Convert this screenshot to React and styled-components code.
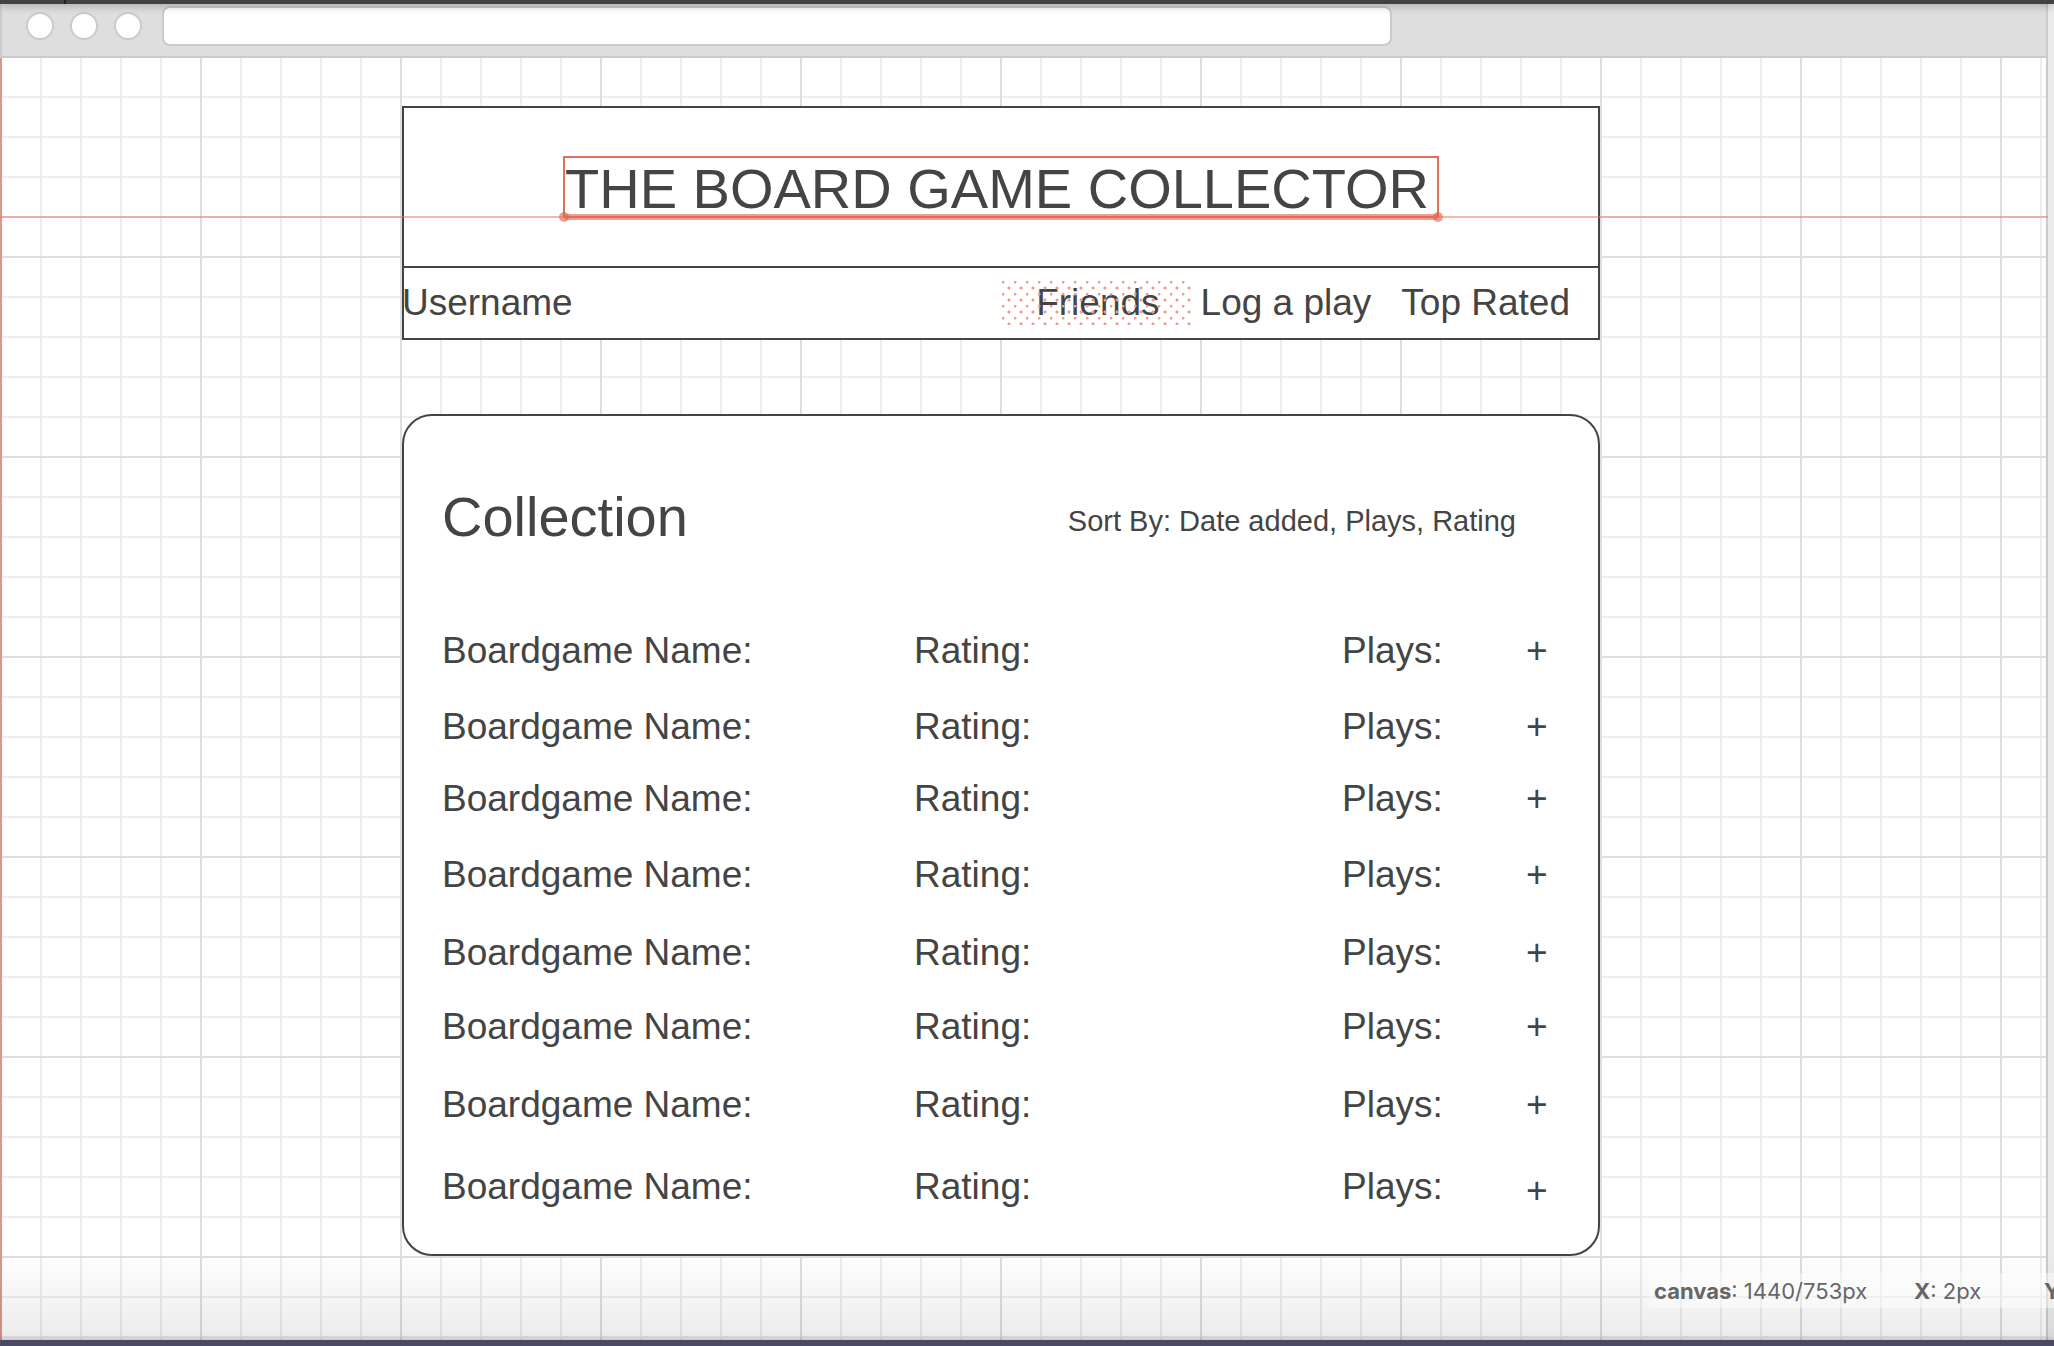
import React from "react";
import styled, { createGlobalStyle, css } from "styled-components";

const ink = "#444444";
const accent = "#e0705a";

const GlobalStyle = createGlobalStyle`
  *, *::before, *::after { box-sizing: border-box; }
  body { margin: 0; background: #ebebeb; overflow: hidden; }
`;

const Screen = styled.div`
  position: relative;
  display: flex;
  flex-direction: column;
  height: 100vh;
  overflow: hidden;
  font-family: "Liberation Sans", Arial, Helvetica, sans-serif;
  color: ${ink};
`;

const AppBar = styled.div`
  position: relative;
  z-index: 2;
  flex: none;
  height: 4px;
  background: linear-gradient(to right, #424242 64px, #222222 64px, #222222 66px, #424242 66px);
  box-shadow: 0 0 10px rgba(0, 0, 0, 0.5);
`;

const Frame = styled.div`
  flex: 1;
  min-height: 0;
  display: flex;
  flex-direction: column;
  margin-right: 6px;
`;

const BrowserBar = styled.div`
  flex: none;
  display: flex;
  align-items: center;
  gap: 16px;
  height: 54px;
  padding: 0 24px 8px;
  background: #dedede;
  border: solid #cbcbcb;
  border-width: 0 2px 2px;
`;

const WindowDot = styled.span`
  flex: none;
  width: 28px;
  height: 28px;
  border: 2px solid #cbcbcb;
  border-radius: 50%;
  background: #ffffff;
`;

const AddressBar = styled.input`
  width: calc(60% + 32px);
  height: 40px;
  margin-left: 4px;
  padding: 0 12px;
  border: 2px solid #cbcbcb;
  border-radius: 8px;
  background: #ffffff;
  color: ${ink};
  font: inherit;
  font-size: 29px;
  outline: none;
`;

const Canvas = styled.main`
  position: relative;
  flex: 1;
  min-height: 0;
  padding: 48px 446px 0 400px;
  border: solid #cbcbcb;
  border-width: 0 2px 0 0;
  border-left: 2px solid #e0968a;
  background-color: #ffffff;
  background-image:
    linear-gradient(to right, #dedede 2px, transparent 2px),
    linear-gradient(to bottom, #dedede 2px, transparent 2px),
    linear-gradient(to right, #ededed 2px, transparent 2px),
    linear-gradient(to bottom, #ededed 2px, transparent 2px);
  background-size: 200px 200px, 200px 200px, 40px 40px, 40px 40px;
  background-position: -2px -2px;
`;

const Banner = styled.header`
  display: flex;
  justify-content: center;
  align-items: flex-start;
  height: 162px;
  padding-top: 48px;
  border: 2px solid ${ink};
  background: #ffffff;
`;

const Title = styled.h1`
  position: relative;
  margin: 0;
  padding-right: 8px;
  border: 2px solid ${accent};
  height: 62px;
  font-size: 56px;
  line-height: 62px;
  font-weight: 400;
  white-space: nowrap;
`;

/* Selected bottom edge: a translucent band with a handle on each end. */
const SelectedEdge = styled.span`
  position: absolute;
  left: 0;
  right: 0;
  bottom: -4px;
  height: 6px;
  background: rgba(224, 94, 72, 0.6);

  &::before, &::after {
    content: "";
    position: absolute;
    top: -2px;
    width: 10px;
    height: 10px;
    border-radius: 50%;
    background: rgba(224, 94, 72, 0.6);
  }
  &::before { left: -6px; }
  &::after { right: -6px; }
`;

const Guide = styled.div`
  position: absolute;
  left: -2px;
  right: -2px;
  top: 158px;
  height: 2px;
  background: rgba(240, 112, 84, 0.5);
`;

const Nav = styled.nav`
  display: flex;
  align-items: center;
  height: 74px;
  margin-top: -2px;
  padding-right: 28px;
  border: 2px solid ${ink};
  background: #ffffff;
  font-size: 37px;
  line-height: 44px;
  white-space: nowrap;
`;

const NavLink = styled.a`
  color: inherit;
  text-decoration: none;
  & + & { margin-left: 30px; }
  ${(p) =>
    p.$user &&
    css`
      margin-left: -2px;
      margin-right: auto;
    `}
  ${(p) =>
    p.$hatched &&
    css`
      position: relative;
      padding: 0 34px;
      margin-right: -23px;
      &::after {
        content: "";
        position: absolute;
        inset: 0;
        background-image:
          radial-gradient(circle at 1px 1px, #f09a8b 1px, transparent 2px),
          radial-gradient(circle at 7px 7px, #f09a8b 1px, transparent 2px);
        background-size: 12px 12px;
      }
    `}
`;

const Panel = styled.section`
  height: 842px;
  margin-top: 74px;
  padding: 70px 38px 0;
  border: 2px solid ${ink};
  border-radius: 30px;
  background: #ffffff;
`;

const PanelHead = styled.div`
  display: flex;
  align-items: center;
  justify-content: space-between;
  margin-bottom: 82px;
  padding-right: 44px;
`;

const PanelTitle = styled.h2`
  margin: 0;
  font-size: 56px;
  line-height: 62px;
  font-weight: 400;
`;

const SortBy = styled.p`
  margin: 0;
  padding-top: 8px;
  font-size: 29px;
  line-height: 34px;
`;

const Games = styled.table`
  width: 100%;
  table-layout: fixed;
  border-collapse: collapse;
  font-size: 37px;
  line-height: 42px;
`;

const Row = styled.tr`
  height: ${(p) => p.$height}px;
  &:last-child td:last-child { vertical-align: bottom; }
`;

const Cell = styled.td`
  width: ${(p) => p.$width};
  padding: 0;
  vertical-align: top;
  white-space: nowrap;
`;

const AddButton = styled.button`
  display: block;
  padding: 0;
  border: 0;
  background: none;
  color: inherit;
  font: inherit;
  cursor: pointer;
`;

const BottomShade = styled.div`
  position: absolute;
  left: 0;
  right: 0;
  bottom: 6px;
  height: 90px;
  pointer-events: none;
  background: linear-gradient(to bottom, rgba(0, 0, 0, 0), rgba(0, 0, 0, 0.08));
`;

const Status = styled.footer`
  position: absolute;
  right: 0;
  bottom: 38px;
  display: flex;
  width: 414px;
  padding-left: 14px;
  overflow: hidden;
  background: linear-gradient(to right, rgba(255, 255, 255, 0), rgba(255, 255, 255, 0.45) 14px);
  font-family: Inter, sans-serif;
  font-size: 22px;
  line-height: 34px;
  color: #666666;
  white-space: nowrap;
`;

const StatusItem = styled.span`
  flex: none;
  width: ${(p) => p.$width}px;
  padding-top: 1px;
  strong { font-weight: 700; }
`;

const BottomBar = styled.div`
  position: relative;
  flex: none;
  height: 6px;
  background: #4a4a66;
  box-shadow: 0 0 5px rgba(0, 0, 0, 0.3);
`;

const rowHeights = [76, 72, 76, 78, 74, 78, 82, 46];

export default function App() {
  return (
    <Screen>
      <GlobalStyle />
      <AppBar />
      <Frame>
        <BrowserBar>
          <WindowDot />
          <WindowDot />
          <WindowDot />
          <AddressBar type="text" aria-label="Address" />
        </BrowserBar>
        <Canvas>
          <Banner>
            <Title>
              THE BOARD GAME COLLECTOR
              <SelectedEdge />
            </Title>
          </Banner>
          <Nav>
            <NavLink href="#user" $user>Username</NavLink>
            <NavLink href="#friends" $hatched>Friends</NavLink>
            <NavLink href="#log">Log a play</NavLink>
            <NavLink href="#top">Top Rated</NavLink>
          </Nav>
          <Panel>
            <PanelHead>
              <PanelTitle>Collection</PanelTitle>
              <SortBy>Sort By: Date added, Plays, Rating</SortBy>
            </PanelHead>
            <Games>
              <tbody>
                {rowHeights.map((height, i) => (
                  <Row key={i} $height={height}>
                    <Cell>Boardgame Name:</Cell>
                    <Cell $width="428px">Rating:</Cell>
                    <Cell $width="184px">Plays:</Cell>
                    <Cell $width="34px">
                      <AddButton type="button" aria-label="Add">+</AddButton>
                    </Cell>
                  </Row>
                ))}
              </tbody>
            </Games>
          </Panel>
          <Guide />
        </Canvas>
      </Frame>
      <BottomShade />
      <Status>
        <StatusItem $width={260}><strong>canvas</strong>: 1440/753px</StatusItem>
        <StatusItem $width={130}><strong>X</strong>: 2px</StatusItem>
        <StatusItem $width={20}><strong>Y</strong></StatusItem>
      </Status>
      <BottomBar />
    </Screen>
  );
}
